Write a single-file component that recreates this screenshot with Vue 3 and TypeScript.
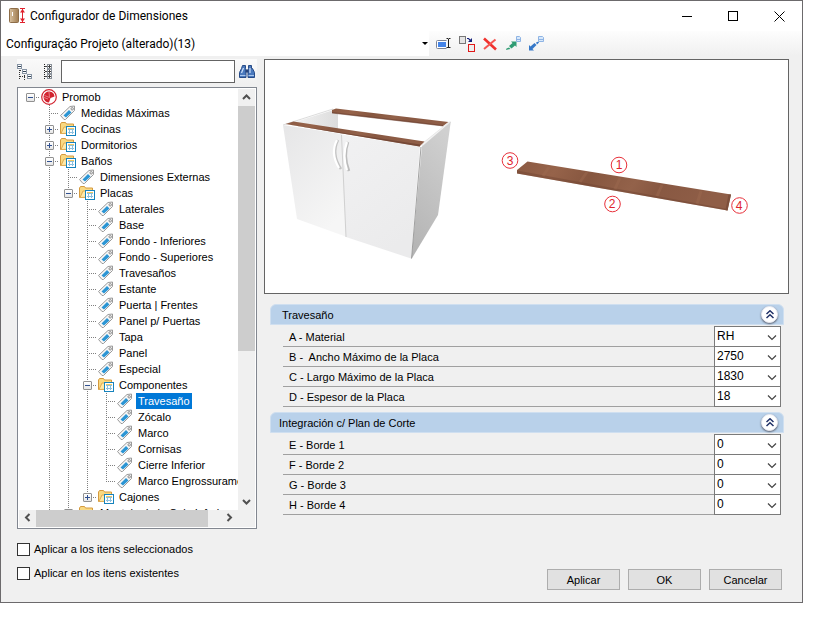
<script setup lang="ts">
import { ref } from 'vue'

type Kind = 'root' | 'folder' | 'tag'
interface Row {
  label: string
  kind: Kind
  guides: boolean[]
  last?: boolean
  open?: boolean
}

const tag = (label: string, guides: boolean[], last = false): Row => ({ label, kind: 'tag', guides, last })
const folder = (label: string, guides: boolean[], open: boolean, last = false): Row => ({ label, kind: 'folder', guides, open, last })

const one = [false]
const two = [false, true]
const three = [false, true, true]
const four = [false, true, true, true]

const rows: Row[] = [
  { label: 'Promob', kind: 'root', guides: [], open: true, last: true },
  tag('Medidas Máximas', one),
  folder('Cocinas', one, false),
  folder('Dormitorios', one, false),
  folder('Baños', one, true),
  tag('Dimensiones Externas', two),
  folder('Placas', two, true),
  ...['Laterales', 'Base', 'Fondo - Inferiores', 'Fondo - Superiores', 'Travesaños', 'Estante', 'Puerta | Frentes', 'Panel p/ Puertas', 'Tapa', 'Panel', 'Especial'].map((l) => tag(l, three)),
  folder('Componentes', three, true),
  ...['Travesaño', 'Zócalo', 'Marco', 'Cornisas', 'Cierre Inferior'].map((l) => tag(l, four)),
  tag('Marco Engrossurame', four, true),
  folder('Cajones', three, false, true),
  folder('Montaje de la Caja Inferior', two, false),
]
const selected = ref('Travesaño')

interface Field { label: string; value: string }
const groups = ref<{ title: string; wide: boolean; open: boolean; fields: Field[] }[]>([
  {
    title: 'Travesaño', wide: true, open: true,
    fields: [
      { label: 'A - Material', value: 'RH' },
      { label: 'B -  Ancho Máximo de la Placa', value: '2750' },
      { label: 'C - Largo Máximo de la Placa', value: '1830' },
      { label: 'D - Espesor de la Placa', value: '18' },
    ],
  },
  {
    title: 'Integración c/ Plan de Corte', wide: false, open: true,
    fields: [
      { label: 'E - Borde 1', value: '0' },
      { label: 'F - Borde 2', value: '0' },
      { label: 'G - Borde 3', value: '0' },
      { label: 'H - Borde 4', value: '0' },
    ],
  },
])
const search = ref('')
const applySelected = ref(false)
const applyExisting = ref(false)
</script>

<template>
  <main class="dialog">
    <header class="titlebar">
      <svg class="app-icon" width="17" height="16" viewBox="0 0 17 16">
        <defs><linearGradient id="door" x2="1"><stop offset="0" stop-color="#d9c2a0" /><stop offset="1" stop-color="#a07c50" /></linearGradient></defs>
        <rect x="0.5" y="0.5" width="9" height="14" rx="1" fill="url(#door)" stroke="#8d6d48" />
        <path d="M3.500 4v4" stroke="#fff" />
        <path d="M11 .5h5M11 14.500h5M13.500 1v13" fill="none" stroke="#e0202c" /><path d="M13.500 1l2.500 3.500h-5zM13.500 14l2.500-3.500h-5z" fill="#e0202c" />
      </svg>
      <h1>Configurador de Dimensiones</h1>
      <div class="window-buttons">
        <button aria-label="Minimizar"><svg width="11" height="11"><path d="M0 5.500h10" stroke="#000" /></svg></button>
        <button aria-label="Maximizar"><svg width="11" height="11"><rect x=".5" y=".5" width="9" height="9" fill="none" stroke="#000" /></svg></button>
        <button aria-label="Cerrar"><svg width="11" height="11"><path d="M.5.5l10 10M10.500.5l-10 10" stroke="#000" /></svg></button>
      </div>
    </header>

    <div class="toolbar">
      <button class="project"><span>Configuração Projeto (alterado)(13)</span><i class="caret"></i></button>
      <button aria-label="Renombrar">
        <svg width="16" height="16" viewBox="0 0 16 16"><rect x=".5" y="4.500" width="12" height="8" rx="1" fill="#fff" stroke="#7c8496" /><rect x="2" y="6" width="8" height="5" fill="#4484e8" /><path d="M12.500 4v9" stroke="#f4f4f4" stroke-width="4" /><path d="M10.500 2.500h1.500l.5.500.5-.5h1.500M12.500 3v9M10.500 11.500h1.500l.5-.5.500.5h1.500" fill="none" stroke="#222" /></svg>
      </button>
      <button aria-label="Duplicar" class="wide">
        <svg width="17" height="18" viewBox="0 0 17 18"><rect x=".5" y="1.500" width="6" height="7" fill="#e4e4e4" stroke="#777" /><path d="M8 3.500h1.500l2.500 2.500" fill="none" stroke="#16227c" stroke-width="1.200" /><path d="M13 3v4H9z" fill="#16227c" /><rect x="9.500" y="9.500" width="6" height="7" fill="#eee" stroke="#e01818" /></svg>
      </button>
      <button aria-label="Eliminar">
        <svg width="16" height="16" viewBox="0 0 16 16"><path d="M1 2.500l12 11" stroke="#f0302c" stroke-width="2.600" /><path d="M12.500 3.500L1 13" stroke="#f55450" stroke-width="2" /></svg>
      </button>
      <button aria-label="Exportar">
        <svg width="16" height="16" viewBox="0 0 16 16"><path d="M3 10l3.500-3L5 5.500h5.500V11L9 9.500 5.500 12.500z" fill="#2f9c73" /><path d="M0 14l4.500-1L3 11.500l-2.500 1z" fill="#2f9c73" /><path d="M10.500.5h3l1 1v4h-4z" fill="#d7e8fb" stroke="#8fb4e4" /><path d="M11 3.500h3" stroke="#8fb4e4" /></svg>
      </button>
      <button aria-label="Importar">
        <svg width="16" height="16" viewBox="0 0 16 16"><path d="M0 14.500V9l1.500 1.500 4-3.500 2 2-4 4 1.500 1.500z" fill="#3678c8" /><path d="M7 6.500l2.500-1 .5 1-2 2z" fill="#3678c8" /><path d="M9.500.5h4l1 1v4h-5z" fill="#d7e8fb" stroke="#8fb4e4" /><path d="M10 3.500h4" stroke="#8fb4e4" /></svg>
      </button>
    </div>

    <div class="body">
      <section class="left">
        <div class="search">
          <button aria-label="Contraer árbol">
            <svg width="16" height="16" viewBox="0 0 16 16"><path d="M2.500 4v12M3 6.500h3M3 12.500h6M7.500 9v7" stroke="#333" stroke-dasharray="1 1" /><rect x=".5" y=".5" width="4" height="4" fill="#fff" stroke="#8794a4" /><rect x="5.500" y="5.500" width="4" height="4" fill="#fff" stroke="#8794a4" /><rect x="10.500" y="10.500" width="4" height="4" fill="#fff" stroke="#8794a4" /><path d="M1 2.500h3M6 7.500h3M11 12.500h3" stroke="#345" /></svg>
          </button>
          <button aria-label="Expandir árbol" class="expand">
            <svg width="10" height="16" viewBox="0 0 10 16"><path d="M1.500 0v16" stroke="#222" stroke-dasharray="1 1" /><g fill="#fff" stroke="#8b929a"><rect x="4.500" y=".5" width="4" height="4" /><rect x="4.500" y="5.500" width="4" height="4" /><rect x="4.500" y="10.500" width="4" height="4" /></g><path d="M5 2.500h3M5 7.500h3M5 12.500h3M6.500 1v3M6.500 6v3M6.500 11v3M2 2.500h2M2 7.500h2M2 12.500h2" stroke="#444" /></svg>
          </button>
          <input v-model="search" type="text" aria-label="Buscar" />
          <button aria-label="Buscar" class="find">
            <svg width="16" height="16" viewBox="0 0 16 16"><path d="M3.500 1.500h3v3l.5 2v7H.5v-5l2-4zM9.500 1.500h3v3l1 0 2 4v5H9v-7l.5-2z" fill="#4a79bd" stroke="#274b87" /><path d="M6.500 5.500h3v3h-3z" fill="#27457c" /><path d="M2.500 9L4.500 4M11 4v5" stroke="#cfe0f8" stroke-width="1.200" /><path d="M1 11.500h5.500M9.500 11.500H15" stroke="#a9c6ee" /></svg>
          </button>
        </div>

        <div class="tree-box">
          <div class="tree" role="tree">
            <div v-for="(row, i) in rows" :key="i" class="row" role="treeitem" :aria-selected="row.label === selected" @click="selected = row.label">
              <i v-for="(g, j) in row.guides" :key="j" class="cell" :class="{ guide: g }"></i>
              <i class="cell branch" :class="{ last: row.last, root: row.kind === 'root' }"><b v-if="row.kind !== 'tag'" class="box" :class="{ plus: !row.open }"></b></i>
              <svg v-if="row.kind === 'root'" class="icon" width="16" height="16" viewBox="0 0 16 16"><circle cx="8" cy="8" r="7.300" fill="#fff" stroke="#d2232f" stroke-width="1.200" /><path d="M8.500 2.500A5.500 5.500 0 0 0 2.500 8 5.500 5.500 0 0 0 8 13.500L9.500 9 13.500 7.500A5.500 5.500 0 0 0 8.500 2.500z" fill="#d2232f" /><path d="M8.500 8.500L8 3M8.500 8.500l-5-2M3 8.500l4 1.500" stroke="#f3a0a6" stroke-width=".7" /></svg>
              <svg v-else-if="row.kind === 'folder'" class="icon" width="16" height="16" viewBox="0 0 16 16"><path d="M.5 12.500V3l1-1.500h4l1 1.500h7v9.500z" fill="#f9d982" stroke="#d59a3e" /><path d="M1 12.500L4 6h10v6z" fill="#ffe9a8" stroke="#e0ad54" /><rect x="6.500" y="5.500" width="9" height="9" fill="#fff" stroke="#1683bd" /><path d="M8 8.500h6M8 11.500h6M9.500 7v6M12.500 7v6" stroke="#8cc0de" /><path d="M8 7.500h6" stroke="#f0c860" /></svg>
              <svg v-else class="icon" width="16" height="16" viewBox="0 0 16 16"><path d="M.5 10.500L10 1.500l4.500-.5v4.500L5.500 14.500H4z" fill="#f7f7f7" stroke="#9a9a9a" /><path d="M3.500 10.500L9 5l2.500 2.500L6 12.500z" fill="#2b95d4" /><circle cx="12.200" cy="3.800" r="1.200" fill="#fff" stroke="#888" /></svg>
              <span class="label" :class="{ selected: row.label === selected }">{{ row.label }}</span>
            </div>
          </div>
          <div class="vbar">
            <svg width="17" height="17"><path d="M5 10l3.500-3.500L12 10" /></svg>
            <div class="vthumb"></div>
            <svg width="17" height="17"><path d="M5 7l3.500 3.500L12 7" /></svg>
          </div>
          <div class="hbar">
            <svg width="17" height="16"><path d="M10.500 4L7 7.500l3.500 3.500" /></svg>
            <div class="hthumb"></div>
            <svg width="17" height="16"><path d="M6.500 4L10 7.500 6.500 11" /></svg>
          </div>
          <div class="corner"></div>
        </div>

        <div class="checks">
          <label><input v-model="applySelected" type="checkbox" />Aplicar a los itens seleccionados</label>
          <label><input v-model="applyExisting" type="checkbox" />Aplicar en los itens existentes</label>
        </div>
      </section>

      <section class="right">
        <div class="preview">
          <svg viewBox="265 60 523 233" preserveAspectRatio="xMinYMin meet">
            <defs>
              <linearGradient id="front" x1="0" y1="0" x2=".6" y2="1"><stop offset="0" stop-color="#e6e6e7" /><stop offset="1" stop-color="#f6f6f6" /></linearGradient>
              <linearGradient id="front2" x1="0" y1="0" x2=".5" y2="1"><stop offset="0" stop-color="#f1f1f2" /><stop offset="1" stop-color="#ebebec" /></linearGradient>
              <linearGradient id="side" x1=".6" y1="0" x2=".3" y2="1"><stop offset="0" stop-color="#d0d0d0" /><stop offset="1" stop-color="#b4b4b4" /></linearGradient>
              <linearGradient id="inner" x1="0" y1="0" x2="1" y2="0"><stop offset="0" stop-color="#f4f4f4" /><stop offset="1" stop-color="#dcdcdc" /></linearGradient>
              <linearGradient id="wood" x2="1" y2=".15"><stop offset="0" stop-color="#8b5a43" /><stop offset=".2" stop-color="#96634a" /><stop offset=".38" stop-color="#86563f" /><stop offset=".6" stop-color="#93624a" /><stop offset=".72" stop-color="#885842" /><stop offset="1" stop-color="#8f5e47" /></linearGradient>
            </defs>
            <path d="M290 123.500L332 110.500 338 114v15.500z" fill="url(#inner)" />
            <path d="M283 125L333 109" stroke="#dcdcdc" />
            <path d="M332 110l4-1.500 112.500 13.500-5.500 4-111-13z" fill="url(#wood)" />
            <path d="M332 112l111 13 .5 1.500L332 113.500z" fill="#6b4030" opacity=".6" />
            <path d="M423 143l26-21h2L422 147z" fill="#f2f2f2" stroke="#ddd" stroke-width=".6" />
            <path d="M450.700 122L422 146.500l-10.500 112.500L438 215z" fill="url(#side)" />
            <path d="M283 125l59 9 5 103-50-18z" fill="url(#front)" />
            <path d="M341 134.500l79 12-9 112-65-21.500z" fill="url(#front2)" />
            <path d="M421 147l-9.500 111.500" stroke="#8a8a8a" stroke-width=".8" />
            <path d="M341.500 135l4.500 102" stroke="#d0d0d0" />
            <path d="M285.500 124l8-2.500 131 20-5 5z" fill="url(#wood)" />
            <path d="M285.500 124L420 144.500v2z" fill="#6b4030" opacity=".7" />
            <path d="M338 140q-7 14 3 29" fill="none" stroke="#c4c4c4" stroke-width="2.600" /><path d="M337 140q-7 13 2 28" fill="none" stroke="#fff" stroke-width="2.200" />
            <path d="M348 142q-5 14 1 29" fill="none" stroke="#bcbcbc" stroke-width="2.600" /><path d="M347 142q-5 13 0 28" fill="none" stroke="#fff" stroke-width="2.200" />
            <path d="M527.500 161.500L731 194.500l-3.500 16L517 173.500v-3.500z" fill="url(#wood)" />
            <path d="M517 170.500l210.500 38.500v1.500L517 173.500z" fill="#6b4030" opacity=".4" />
            <path d="M731 194.500l-3.500 16-2-.5 3-15.500z" fill="#7d4f3b" />
            <path d="M549 167l-6 9M587 172l-7 10M620 178l-5 11M662 185l-5 11M701 191l-4 13" stroke="#a06c52" opacity=".4" stroke-width="3" />
            <g fill="#fff" stroke="#e8313b"><circle cx="619" cy="165" r="7.800" /><circle cx="612.500" cy="204" r="7.800" /><circle cx="510" cy="160.500" r="7.800" /><circle cx="739.500" cy="205.500" r="7.800" /></g>
            <g class="marks"><text x="619" y="169">1</text><text x="612" y="208">2</text><text x="510" y="165">3</text><text x="739" y="210">4</text></g>
          </svg>
        </div>

        <div class="groups">
          <section v-for="(group, gi) in groups" :key="gi" class="group">
            <h2 :class="{ wide: group.wide }">{{ group.title }}
              <button :aria-label="'Contraer ' + group.title" :aria-expanded="group.open" @click="group.open = !group.open">
                <svg width="8" height="9" viewBox="0 0 8 9"><path d="M.5 4L4 .8 7.500 4M.5 8L4 4.800 7.500 8" fill="none" stroke="#1e2f66" stroke-width="1.500" /></svg>
              </button>
            </h2>
            <div v-if="group.open" class="fields">
              <div v-for="(field, fi) in group.fields" :key="fi" class="field">
                <label :for="'f' + gi + fi">{{ field.label }}</label>
                <span class="combo">
                  <select :id="'f' + gi + fi" v-model="field.value"><option>{{ field.value }}</option></select>
                  <svg width="10" height="6"><path d="M1 .5l4 4 4-4" fill="none" stroke="#444" stroke-width="1.200" /></svg>
                </span>
              </div>
            </div>
          </section>
        </div>

        <footer>
          <button>Aplicar</button>
          <button>OK</button>
          <button>Cancelar</button>
        </footer>
      </section>
    </div>
  </main>
</template>

<style>
body {
  margin: 0;
  background: #fff;
}
</style>

<style scoped>
* { box-sizing: border-box; }
.dialog {
  margin-right: 28px;
  border: 1px solid #6c6a6c;
  background: #f0f0f0;
  color: #000;
  font: 11px/16px "Liberation Sans", Arial, sans-serif;
}
button {
  border: 0;
  padding: 0;
  background: none;
  font: inherit;
  color: inherit;
}
svg { display: block; }
.titlebar {
  display: flex;
  align-items: center;
  height: 30px;
  padding-left: 8px;
  background: #fff;
}
h1 {
  margin: 0 0 0 4px;
  font: 12px/16px Roboto, sans-serif;
}
.window-buttons { display: flex; margin-left: auto; }
.window-buttons button {
  display: grid;
  place-items: center;
  width: 46px;
  height: 30px;
}
.toolbar {
  display: flex;
  align-items: center;
  gap: 7px;
  height: 25px;
  background: linear-gradient(#fdfdfd, #f0f0f0);
}
.project {
  display: flex;
  align-items: center;
  justify-content: space-between;
  width: 428px;
  height: 25px;
  padding: 0 1px 0 5px;
  background: #fff;
  font: 12px/16px Roboto, sans-serif;
}
.caret {
  border: 3px solid transparent;
  border-top-color: #000;
  border-bottom: 0;
}
.body { display: flex; padding: 3px 13px 12px 16px; }
.left { width: 240px; flex: none; }
.search {
  display: flex;
  align-items: center;
  height: 25px;
  margin-bottom: 3px;
  padding-right: 2px;
  background: linear-gradient(#fafafa, #f0f0f0);
}
.search .expand { margin-left: 10px; }
.search input {
  flex: 1;
  min-width: 0;
  height: 23px;
  margin: 0 4px 0 8px;
  border: 1px solid #646464;
  background: #fff;
  font: inherit;
}
.tree-box {
  display: grid;
  grid-template: 421px 17px / 1fr 17px;
  padding: 1px;
  border: 1px solid #828790;
  background: #fff;
}
.tree { overflow: hidden; min-width: 0; }
.row {
  display: flex;
  width: max-content;
  height: 16px;
  padding-left: 2px;
}
.cell {
  position: relative;
  width: 19px;
  height: 16px;
}
.guide, .branch {
  background: repeating-linear-gradient(#808080 0 1px, transparent 1px 2px) 9px 0 / 1px 100% no-repeat;
}
.branch {
  background:
    repeating-linear-gradient(#808080 0 1px, transparent 1px 2px) 9px 0 / 1px 100% no-repeat,
    repeating-linear-gradient(90deg, #808080 0 1px, transparent 1px 2px) 9px 8px / 10px 1px no-repeat;
}
.branch.last { background-size: 1px 8px, 10px 1px; }
.branch.root { background-size: 0 0, 10px 1px; }
.box {
  position: absolute;
  left: 5px;
  top: 4px;
  width: 9px;
  height: 9px;
  border: 1px solid #919191;
  border-radius: 1px;
  background: linear-gradient(#305090, #305090) center / 5px 1px no-repeat, linear-gradient(#fff, #e6e6e6);
}
.box.plus {
  background: linear-gradient(#305090, #305090) center / 5px 1px no-repeat, linear-gradient(#305090, #305090) center / 1px 5px no-repeat, linear-gradient(#fff, #e6e6e6);
}
.icon { margin-left: 1px; }
.label { margin-left: 3px; padding: 0 2px; white-space: nowrap; }
.selected { background: #0078d7; color: #fff; }
.vbar, .hbar { display: flex; background: #f0f0f0; }
.vbar { flex-direction: column; justify-content: space-between; }
.vbar svg, .hbar svg { flex: none; fill: none; stroke: #505050; stroke-width: 2; }
.vthumb { height: 245px; margin-bottom: auto; background: #cdcdcd; }
.hthumb { width: 172px; background: #cdcdcd; }
.hbar { justify-content: space-between; }
.hthumb + svg { margin-left: auto; }
.corner { background: #f0f0f0; }
.checks { display: grid; gap: 8px; margin-top: 12px; padding-bottom: 9px; }
.checks label { display: flex; align-items: center; gap: 4px; }
.checks input {
  appearance: none;
  width: 13px;
  height: 13px;
  margin: 0;
  border: 1px solid #333;
  background: #fff;
}
.checks input:checked { background: #0078d7; }
.right {
  display: flex;
  flex: 1;
  flex-direction: column;
  min-width: 0;
  margin-left: 7px;
}
.preview { border: 1px solid #646464; background: #fff; }
.preview svg { width: 100%; }
.marks { fill: #e0222c; font: 12px "Liberation Sans", Arial, sans-serif; text-anchor: middle; }
.groups { padding: 10px 5px 0 6px; }
.group { margin-bottom: 5px; }
h2 {
  display: flex;
  align-items: center;
  justify-content: space-between;
  height: 21px;
  margin: 0;
  padding: 0 5px 0 8px;
  border: 1px solid #cfdff0;
  border-radius: 6px 6px 0 0;
  background: #b9d1ea;
  font: inherit;
}
h2.wide { padding-left: 11px; }
h2 button {
  display: grid;
  place-items: center;
  width: 17px;
  height: 17px;
  border: 1px solid #e8eaf2;
  border-radius: 50%;
  background: #fff;
  box-shadow: 0 1px 2px #555c6c;
}
.fields { padding: 2px 3px 0 13px; }
.field {
  display: flex;
  align-items: stretch;
  height: 20px;
  border-bottom: 1px solid #a0a0a0;
}
.field label {
  flex: 1;
  padding: 2px 0 0 6px;
  white-space: pre;
}
.combo {
  position: relative;
  width: 67px;
  height: 21px;
  margin-top: -1px;
  border: 1px solid #7a7a7a;
  background: #fff;
}
.combo select {
  appearance: none;
  width: 100%;
  height: 18px;
  border: 0;
  padding: 0 2px;
  background: none;
  font: inherit;
  font-size: 12px;
}
.combo svg { position: absolute; right: 3px; top: 8px; pointer-events: none; }
footer {
  display: flex;
  justify-content: flex-end;
  gap: 8px;
  margin-top: auto;
  padding: 0 7px 0 0;
}
footer button {
  width: 73px;
  height: 21px;
  border: 1px solid #adadad;
  background: #e1e1e1;
}
</style>
